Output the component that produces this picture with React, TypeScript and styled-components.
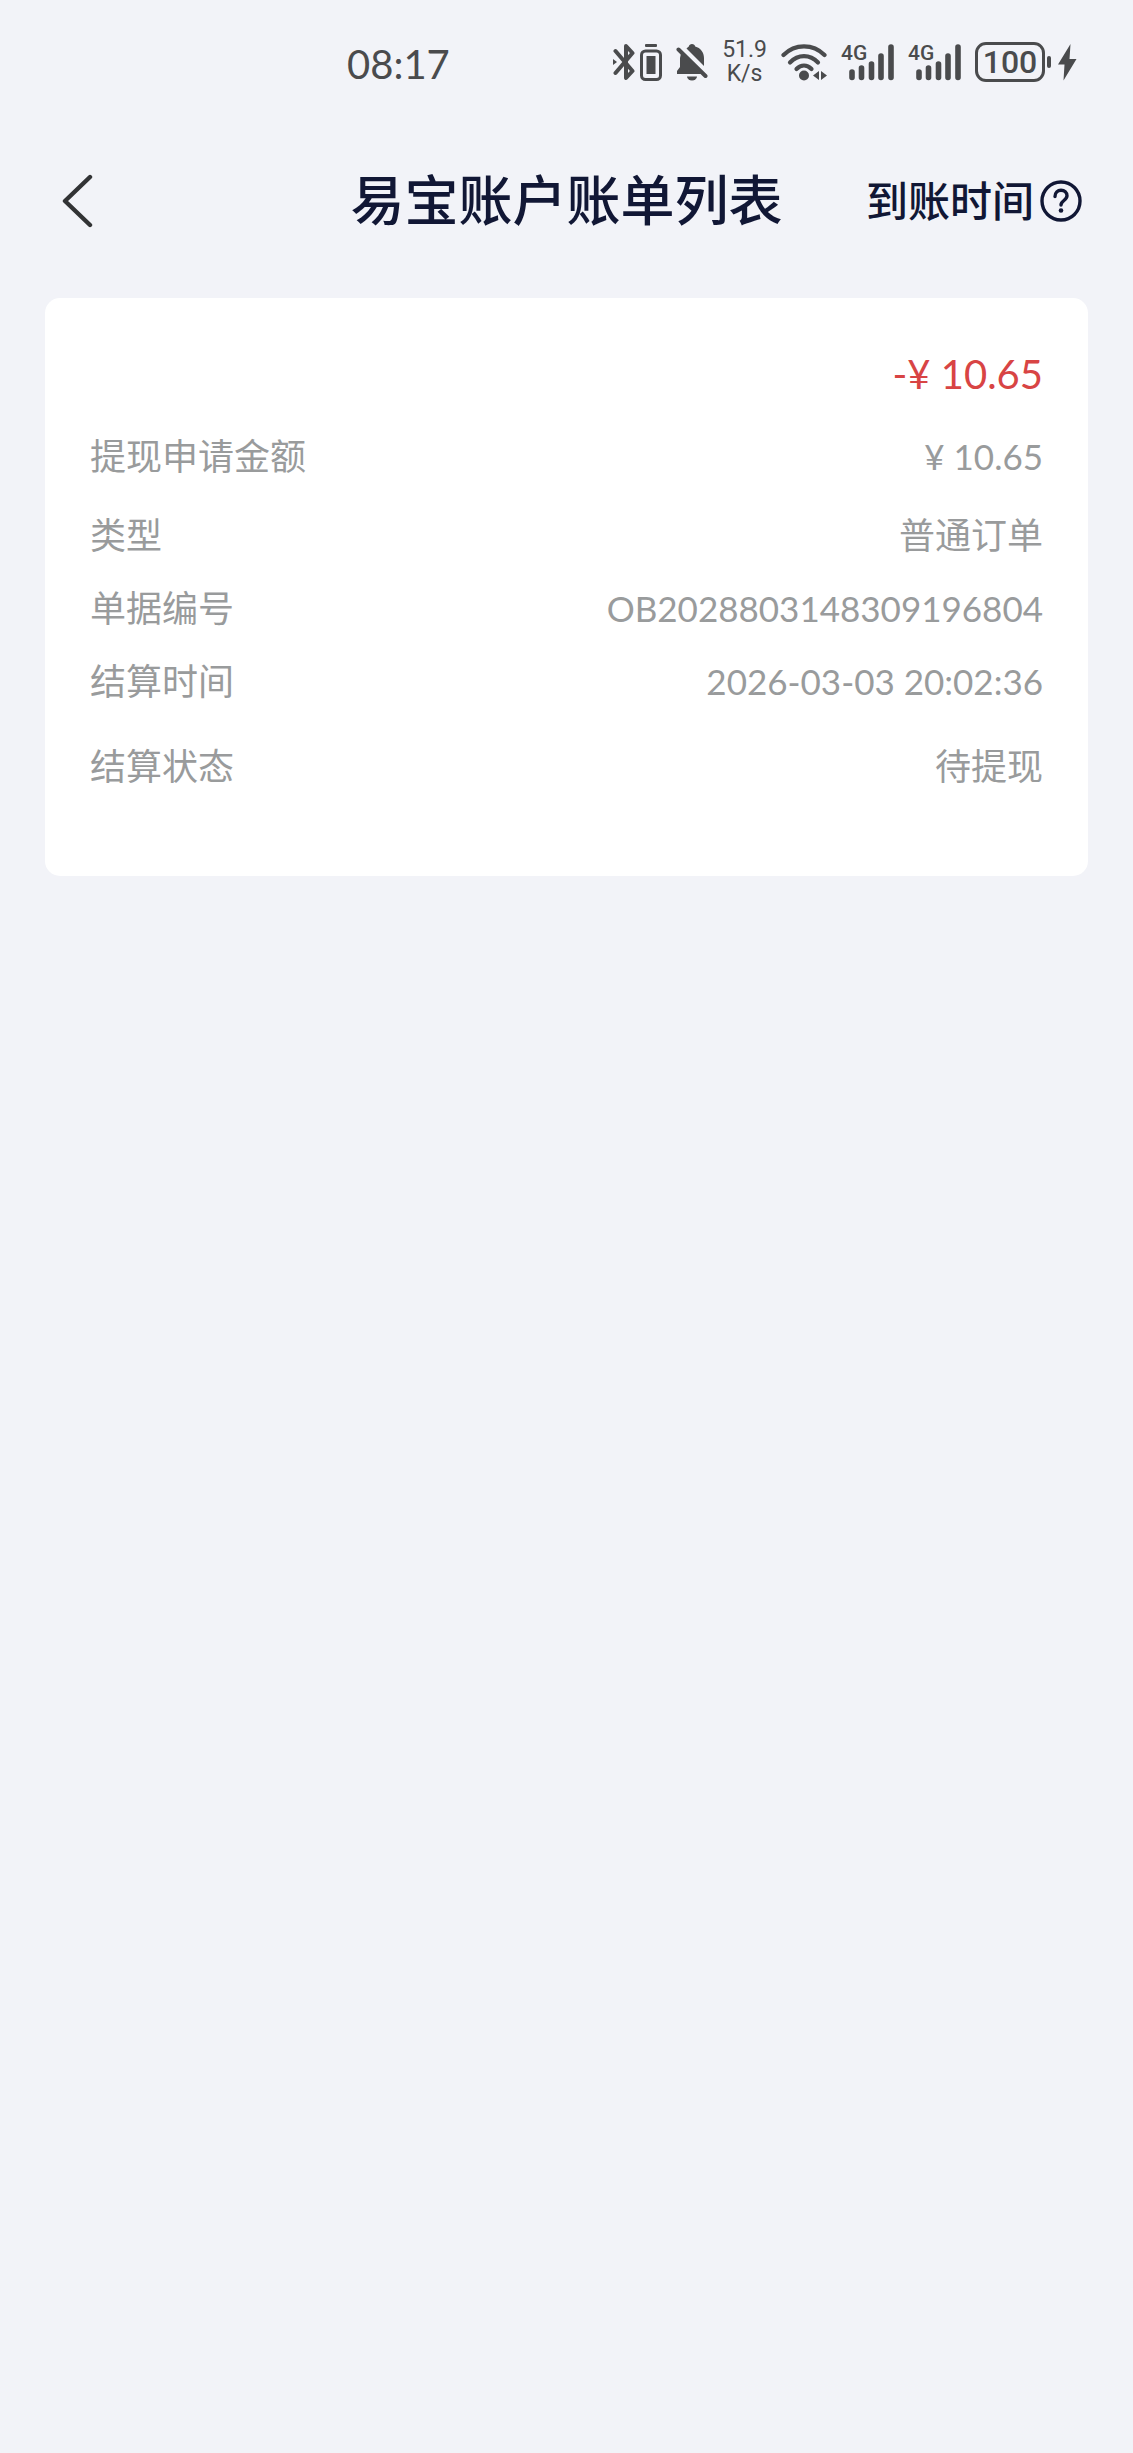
import React from "react";
import styled, { createGlobalStyle } from "styled-components";

const ink = "#4a4b4d";
const navy = "#111735";
const cjk = `Lato, "Noto Sans CJK SC", sans-serif`;

const GlobalStyle = createGlobalStyle`
  *, *::before, *::after { box-sizing: border-box; }
  html { min-height: 100%; background: #f2f3f8; }
  body { margin: 0; background: #f2f3f8; font-family: ${cjk}; }
`;

const Screen = styled.div`
  display: flex;
  flex-direction: column;
  min-height: 100vh;
`;

const StatusBar = styled.div`
  display: flex;
  align-items: center;
  justify-content: space-between;
  height: 124px;
  padding: 0 56px 0 347px;
  color: ${ink};
`;

const Clock = styled.time`
  font-size: 40px;
  line-height: 48px;
  padding-top: 4px;
`;

const Indicators = styled.div`
  display: flex;
  align-items: center;
  gap: 14px;
`;

const Pair = styled.div`
  display: flex;
  align-items: center;
  gap: 5px;
`;

const Glyph = styled.svg`
  display: block;
  flex: none;
`;

const Speed = styled.div`
  display: flex;
  flex-direction: column;
  align-items: center;
  font-family: Roboto, sans-serif;
  font-size: 23px;
  line-height: 24px;
`;

const SignalBox = styled.div`
  position: relative;
`;

const Network = styled.span`
  position: absolute;
  top: 0;
  left: 0;
  font-family: Roboto, sans-serif;
  font-size: 21px;
  font-weight: 500;
  line-height: 22px;
`;

const BatteryLevel = styled.div`
  display: flex;
  align-items: center;
  justify-content: center;
  width: 70px;
  height: 40px;
  border: 3px solid ${ink};
  border-radius: 11px;
  font-family: Roboto, sans-serif;
  font-size: 32px;
  font-weight: 500;
  line-height: 32px;
`;

const BatteryTip = styled.div`
  width: 4px;
  height: 12px;
  margin: 0 2px 0 -3px;
  border-radius: 2px;
  background: ${ink};
`;

const Header = styled.header`
  display: grid;
  grid-template-columns: 1fr auto 1fr;
  align-items: center;
  height: 150px;
  padding: 4px 51px 0;
`;

const BackButton = styled.button`
  justify-self: start;
  padding: 8px 10px;
  border: 0;
  background: none;
  color: #323335;
  cursor: pointer;
`;

const Title = styled.h1`
  margin: 0;
  color: ${navy};
  font-size: 54px;
  font-weight: 500;
  line-height: 64px;
`;

const HelpButton = styled.button`
  display: flex;
  align-items: center;
  justify-self: end;
  gap: 6px;
  padding: 0;
  border: 0;
  background: none;
  color: ${navy};
  font-family: inherit;
  font-size: 42px;
  font-weight: 500;
  line-height: 54px;
  white-space: nowrap;
  cursor: pointer;
`;

const Card = styled.main`
  margin: 24px 45px;
  padding: 46px 45px 83px;
  border-radius: 15px;
  background: #fff;
`;

const Amount = styled.p`
  margin: 0 0 26px;
  color: #d84444;
  font-size: 40px;
  line-height: 60px;
  text-align: right;
`;

const Details = styled.dl`
  margin: 0;
`;

const Row = styled.div<{ $gap: number }>`
  display: flex;
  align-items: center;
  justify-content: space-between;
  height: 53px;
  margin-top: ${(p) => p.$gap}px;
  color: #999b9c;
  font-size: 36px;
  line-height: 53px;
`;

const Term = styled.dt``;

const Value = styled.dd<{ $numeric?: boolean }>`
  margin: 0;
  font-size: ${(p) => (p.$numeric ? 35 : 36)}px;
`;

const rows = [
  { label: "提现申请金额", value: "¥ 10.65", numeric: true, gap: 0 },
  { label: "类型", value: "普通订单", numeric: false, gap: 26 },
  { label: "单据编号", value: "OB2028803148309196804", numeric: true, gap: 20 },
  { label: "结算时间", value: "2026-03-03 20:02:36", numeric: true, gap: 20 },
  { label: "结算状态", value: "待提现", numeric: false, gap: 32 },
];

const BluetoothIcon = () => (
  <Glyph width="22" height="40" viewBox="0 0 22 40" fill="none" stroke={ink} strokeWidth="4" strokeLinejoin="round" strokeLinecap="round" aria-hidden>
    <path d="M2.500 9 19.500 29 13 36V4L19.500 11 2.500 31" />
    <path d="M0 17v6l4-3z" fill={ink} stroke="none" />
  </Glyph>
);

const DeviceBatteryIcon = () => (
  <Glyph width="22" height="40" viewBox="0 0 22 40" aria-hidden>
    <rect x="5" y="2" width="12" height="3" rx="1" fill={ink} />
    <rect x="1.500" y="9" width="19" height="28.500" rx="4" fill="none" stroke={ink} strokeWidth="3" />
    <rect x="6.500" y="14" width="9" height="18" fill={ink} />
  </Glyph>
);

const BellOffIcon = () => (
  <Glyph width="32" height="40" viewBox="0 0 32 40" aria-hidden>
    <path d="M16 2c1.600 0 3 1 3.200 2.600C24.500 6 28 10.500 28 16v8L10.500 6.500A12 12 0 0 1 12.800 4.600C13 3 14.400 2 16 2z" fill={ink} />
    <path d="M5 11.500 25.500 32H1v-3l3-4V16z" fill={ink} />
    <path d="M11 34.500h10a5 4 0 0 1-10 0z" fill={ink} />
    <path d="M2.500 7.500 29.500 34" stroke={ink} strokeWidth="4" strokeLinecap="round" />
  </Glyph>
);

const WifiIcon = () => (
  <Glyph width="46" height="40" viewBox="0 0 46 40" fill="none" stroke={ink} strokeWidth="4.200" strokeLinecap="round" aria-hidden>
    <path d="M2.500 13C14 1.500 32 1.500 43.500 13" />
    <path d="M9 20.500c8-8.500 20-8.500 28 0" />
    <path d="M15.500 27c4.500-4.500 10.500-4.500 15 0" />
    <circle cx="23" cy="33.500" r="5" fill={ink} stroke="none" />
    <path d="M38 29v9l-6-4.500zM40 29v9l6-4.500z" fill={ink} stroke="none" />
  </Glyph>
);

const Signal = () => (
  <SignalBox>
    <Network>4G</Network>
    <Glyph width="53" height="40" viewBox="0 0 53 40" stroke={ink} strokeWidth="5.600" strokeLinecap="round" aria-hidden>
      <path d="M11 30v5.500M20.500 26v9.500M30.500 22v13.500M40 14v21.500M50 5v30.500" />
    </Glyph>
  </SignalBox>
);

const BoltIcon = () => (
  <Glyph width="19" height="40" viewBox="0 0 19 40" fill={ink} aria-hidden>
    <path d="M12.500 2 0 22.500h6.500L5.500 38.500 18.500 17H11.500z" />
  </Glyph>
);

const BackIcon = () => (
  <Glyph width="32" height="54" viewBox="0 0 32 54" fill="none" stroke="currentColor" strokeWidth="4.400" strokeLinecap="round" strokeLinejoin="round" aria-hidden>
    <path d="M29 3 4 27l25 24" />
  </Glyph>
);

const HelpIcon = () => (
  <Glyph width="42" height="42" viewBox="0 0 42 42" fill="none" stroke="currentColor" strokeWidth="3.400" strokeLinecap="round" aria-hidden>
    <circle cx="21" cy="21" r="19" />
    <path d="M15 16.500c0-4 2.700-6.200 6-6.200 3.500 0 6 2.200 6 5.500 0 4.700-6 4.700-6 9.200" />
    <circle cx="21" cy="30.500" r="2.300" fill="currentColor" stroke="none" />
  </Glyph>
);

export default function App() {
  return (
    <Screen>
      <GlobalStyle />
      <StatusBar>
        <Clock>08:17</Clock>
        <Indicators>
          <Pair>
            <BluetoothIcon />
            <DeviceBatteryIcon />
          </Pair>
          <BellOffIcon />
          <Speed>
            <span>51.9</span>
            <span>K/s</span>
          </Speed>
          <WifiIcon />
          <Signal />
          <Signal />
          <Pair>
            <BatteryLevel>100</BatteryLevel>
            <BatteryTip />
            <BoltIcon />
          </Pair>
        </Indicators>
      </StatusBar>
      <Header>
        <BackButton type="button" aria-label="返回">
          <BackIcon />
        </BackButton>
        <Title>易宝账户账单列表</Title>
        <HelpButton type="button">
          到账时间
          <HelpIcon />
        </HelpButton>
      </Header>
      <Card>
        <Amount>-¥ 10.65</Amount>
        <Details>
          {rows.map((row) => (
            <Row key={row.label} $gap={row.gap}>
              <Term>{row.label}</Term>
              <Value $numeric={row.numeric}>{row.value}</Value>
            </Row>
          ))}
        </Details>
      </Card>
    </Screen>
  );
}
